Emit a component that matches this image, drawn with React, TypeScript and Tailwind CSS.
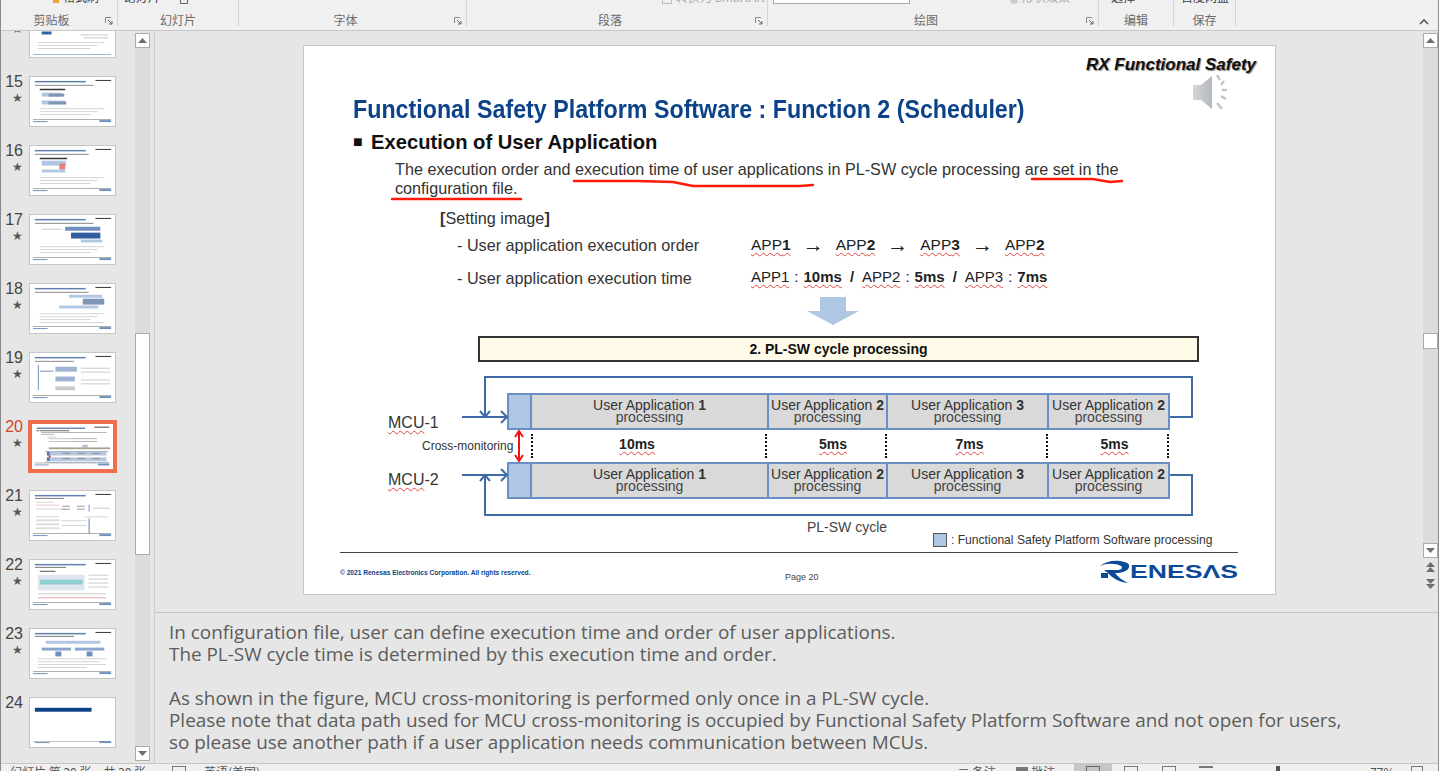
import type { ReactNode } from "react";

const sans = "font-['Liberation_Sans',Arial,sans-serif]";
const cjk = "font-['Noto_Sans_CJK_SC','Noto_Sans',sans-serif]";

type Box = [number, number, number, number, string];

const GRAY = "#c9c9c9";
const BLUE = "#2f5f9e";
const PALE = "#b0c7e3";

const common: Box[] = [
  [5, 4, 52, 1.5, "#5f7fb0"],
  [67, 3, 16, 1, "#333333"],
  [3, 43, 80, 0.6, "#777777"],
  [3, 45, 15, 1, "#6f8fbf"],
  [71, 44, 12, 2, "#6f8fbf"],
];

const lines = (y: number, n: number, x = 8, w = 66, step = 3): Box[] =>
  Array.from({ length: n }, (_, i): Box => [x, y + i * step, w - (i % 3) * 7, 0.8, GRAY]);

const thumbs: { n: number; shapes: Box[] }[] = [
  {
    n: 14,
    shapes: [
      [12, 24, 10, 3, BLUE],
      [52, 27, 28, 1, GRAY],
      [55, 30, 25, 1, GRAY],
      ...lines(35, 3, 8, 68),
      [3, 47, 80, 1, "#9fb4d2"],
    ],
  },
  {
    n: 15,
    shapes: [
      ...common,
      [5, 8, 60, 1, "#888888"],
      [10, 12, 26, 1.5, "#333333"],
      [12, 16, 20, 4, PALE],
      [19, 17, 16, 3, "#7f95b5"],
      [12, 24, 24, 4, PALE],
      [19, 25, 18, 3, "#7f95b5"],
      ...lines(32, 3, 10, 66),
    ],
  },
  {
    n: 16,
    shapes: [
      ...common,
      [5, 8, 55, 1, "#888888"],
      [10, 12, 28, 1.5, "#333333"],
      [12, 15, 25, 5, PALE],
      [30, 18, 6, 6, "#e77b7b"],
      [12, 24, 24, 3, PALE],
      ...lines(32, 3, 10, 66),
    ],
  },
  {
    n: 17,
    shapes: [
      ...common,
      [5, 8, 60, 1, "#888888"],
      [36, 12, 36, 4, "#6f8fbf"],
      [42, 18, 30, 6, BLUE],
      [12, 14, 20, 1, GRAY],
      [52, 25, 22, 3, PALE],
      ...lines(32, 3, 10, 66),
    ],
  },
  {
    n: 18,
    shapes: [
      ...common,
      [5, 8, 55, 1, "#888888"],
      [40, 11, 34, 3, PALE],
      [54, 15, 22, 6, "#7f95b5"],
      [30, 22, 40, 3, PALE],
      ...lines(30, 4, 10, 66),
    ],
  },
  {
    n: 19,
    shapes: [
      ...common,
      [5, 8, 40, 1, "#888888"],
      [8, 12, 1, 26, "#6f8fbf"],
      [10, 18, 14, 1, "#6f8fbf"],
      [26, 14, 22, 5, "#9fb4d2"],
      [52, 15, 30, 1, GRAY],
      [52, 19, 30, 1, GRAY],
      [26, 24, 20, 5, "#9fb4d2"],
      [52, 27, 30, 1, GRAY],
      [52, 31, 30, 1, GRAY],
      [26, 34, 20, 4, GRAY],
    ],
  },
  {
    n: 20,
    shapes: [
      ...common,
      [5, 7, 2, 1, "#333333"],
      [8, 7, 32, 1, "#555555"],
      [10, 9, 70, 0.8, "#9a9a9a"],
      [10, 11, 14, 0.8, "#9a9a9a"],
      [16, 14, 10, 0.8, GRAY],
      [18, 16, 28, 0.8, "#aaaaaa"],
      [18, 19, 28, 0.8, "#aaaaaa"],
      [45, 16, 25, 0.8, "#999999"],
      [45, 19, 25, 0.8, "#999999"],
      [54, 23, 6, 3, PALE],
      [18, 26, 66, 2, "#a8a18c"],
      [16, 31, 64, 4, "#b8c6da"],
      [16, 37, 64, 4, "#b8c6da"],
      [16, 31, 3, 4, "#4f7cb8"],
      [16, 37, 3, 4, "#4f7cb8"],
      [18, 35, 2, 2, "#ee1111"],
      [33, 32, 8, 1, "#888888"],
      [49, 32, 8, 1, "#888888"],
      [65, 32, 8, 1, "#888888"],
      [33, 38, 8, 1, "#888888"],
      [49, 38, 8, 1, "#888888"],
      [65, 38, 8, 1, "#888888"],
      [14, 30, 68, 0.7, "#6f8fbf"],
      [14, 42, 68, 0.7, "#6f8fbf"],
    ],
  },
  {
    n: 21,
    shapes: [
      ...common,
      [5, 7, 30, 1, "#777777"],
      [6, 11, 18, 0.8, GRAY],
      [6, 14, 24, 0.8, "#e7b5b5"],
      [6, 18, 30, 0.8, GRAY],
      [33, 15, 8, 1, "#999999"],
      [33, 18, 8, 1, "#999999"],
      [48, 15, 8, 1, "#999999"],
      [48, 18, 8, 1, "#999999"],
      [60, 14, 1, 7, "#6f8fbf"],
      [64, 17, 18, 1, GRAY],
      [56, 26, 24, 0.8, GRAY],
      [60, 28, 1, 15, "#4f7cb8"],
      [6, 26, 24, 0.8, GRAY],
      [6, 29, 24, 2, "#dddddd"],
      [6, 33, 24, 2, "#dddddd"],
      [6, 37, 24, 2, "#dddddd"],
      [32, 30, 26, 0.8, GRAY],
      [32, 35, 26, 0.8, GRAY],
    ],
  },
  {
    n: 22,
    shapes: [
      ...common,
      [5, 7, 32, 1, "#777777"],
      [10, 11, 16, 1, "#555555"],
      [8, 15, 48, 16, "#dfe6ef"],
      [10, 20, 44, 5, "#8fd0d0"],
      [60, 15, 20, 1, GRAY],
      [60, 19, 20, 1, GRAY],
      [60, 23, 20, 1, GRAY],
      [60, 27, 20, 1, GRAY],
      [8, 34, 70, 1, GRAY],
      [8, 38, 70, 1, "#e7a5a5"],
    ],
  },
  {
    n: 23,
    shapes: [
      ...common,
      [5, 7, 40, 1, "#777777"],
      [16, 12, 56, 3, PALE],
      [12, 19, 30, 3, "#8ba6cc"],
      [46, 19, 30, 3, "#8ba6cc"],
      [26, 23, 6, 5, "#6f8fbf"],
      [58, 23, 6, 5, "#6f8fbf"],
      [8, 30, 70, 0.8, GRAY],
      [8, 33, 64, 0.8, GRAY],
      [8, 36, 70, 0.8, GRAY],
      [8, 39, 50, 0.8, GRAY],
    ],
  },
  {
    n: 24,
    shapes: [
      [5, 10, 58, 4, "#0b4288"],
      [3, 44, 80, 0.6, "#999999"],
      [5, 45, 15, 1, "#6f8fbf"],
      [71, 44, 12, 2, "#6f8fbf"],
    ],
  },
];

const Triangle = ({ up, color = "#6e6e6e" }: { up?: boolean; color?: string }) => (
  <svg width="9" height="5" viewBox="0 0 9 5">
    <path d={up ? "M0 5 4.5 0 9 5Z" : "M0 0 4.5 5 9 0Z"} fill={color} />
  </svg>
);

const ScrollButton = ({ up }: { up?: boolean }) => (
  <div className="flex h-[15px] w-[15px] shrink-0 items-center justify-center border border-[#ababab] bg-white">
    <Triangle up={up} />
  </div>
);

const Launcher = () => (
  <svg width="8" height="8" viewBox="0 0 8 8" className="absolute bottom-[1px] right-[4px]">
    <path d="M.5 6V.5H6" fill="none" stroke="#8a8a8a" />
    <path d="M3 3 7 7M7 4v3H4" fill="none" stroke="#666666" />
  </svg>
);

const RibbonGroup = ({
  label,
  width,
  launcher,
  labelPad,
  children,
}: {
  label: string;
  width: string;
  launcher?: boolean;
  labelPad?: string;
  children?: ReactNode;
}) => (
  <div className={`relative flex h-[26px] shrink-0 flex-col border-r border-[#d4d4d4] ${width}`}>
    <div className="flex h-[4px] items-end overflow-hidden text-[12px] leading-[14px] text-[#777777]">
      {children}
    </div>
    <div className={`flex h-[22px] items-center justify-center pt-[10px] text-[12px] leading-none text-[#6a6a6a] ${labelPad ?? ""}`}>
      {label}
    </div>
    {launcher ? <Launcher /> : null}
  </div>
);

const Ribbon = () => (
  <div className={`flex h-[31px] shrink-0 border-b border-[#c8c8c8] bg-[#f0f0f0] ${cjk}`}>
    <RibbonGroup label="剪贴板" width="w-[117px]" launcher labelPad="pr-[15px]">
      <span className="ml-[52px] flex items-end gap-1">
        <span className="mb-[1px] h-[3px] w-[6px] bg-[#e8a33d]" />
        <span className="text-[#444444]">格式刷</span>
      </span>
    </RibbonGroup>
    <RibbonGroup label="幻灯片" width="w-[121px]">
      <span className="ml-[6px] flex items-end gap-[20px]">
        <span className="text-[#444444]">幻灯片</span>
        <span className="h-[4px] w-[8px] border-x border-b border-[#666666]" />
      </span>
    </RibbonGroup>
    <RibbonGroup label="字体" width="w-[228px]" launcher labelPad="pr-[14px]" />
    <RibbonGroup label="段落" width="w-[301px]" launcher labelPad="pr-[14px]">
      <span className="ml-[195px] flex items-end gap-1 text-[#aaaaaa]">
        <span className="h-[4px] w-[10px] border-x border-b border-[#bbbbbb]" />
        转换为 SmartArt
      </span>
    </RibbonGroup>
    <RibbonGroup label="绘图" width="w-[331px]" launcher labelPad="pr-[14px]">
      <span className="ml-[5px] flex h-[4px] w-[137px] border-x border-b border-[#aaaaaa] bg-white" />
      <span className="ml-[100px] flex items-end gap-1 text-[#aaaaaa]">
        <span className="h-[4px] w-[8px] rounded-b-full bg-[#cccccc]" />
        形状效果
      </span>
    </RibbonGroup>
    <RibbonGroup label="编辑" width="w-[75px]">
      <span className="ml-[12px] text-[#444444]">选择</span>
    </RibbonGroup>
    <RibbonGroup label="保存" width="w-[62px]">
      <span className="ml-[7px] text-[#444444]">百度网盘</span>
    </RibbonGroup>
    <div className="flex flex-1 items-start justify-end pr-[9px] pt-[19px]">
      <svg width="10" height="6" viewBox="0 0 10 6">
        <path d="M1 5 5 1 9 5" fill="none" stroke="#555555" strokeWidth="1.6" />
      </svg>
    </div>
  </div>
);

const Thumb = ({ n, shapes }: { n: number; shapes: Box[] }) => {
  const active = n === 20;
  return (
    <div className="flex h-[69px] shrink-0 items-start">
      <div className="-mt-[3px] flex w-[28px] shrink-0 flex-col items-end pr-[6px]">
        <span className={`text-[16px] leading-[17px] ${active ? "text-[#d24726]" : "text-[#444444]"} ${sans}`}>{n}</span>
        {n !== 24 ? <span className="mt-[2px] text-[12px] leading-[12px] text-[#555555]">★</span> : null}
      </div>
      <div
        className={`h-[51px] w-[87px] shrink-0 overflow-hidden bg-white ${
          active ? "border-[3px] border-[#ee6e4f] outline-1 outline-[#ee6e4f]" : "border border-[#c6c6c6]"
        }`}
      >
        <svg viewBox="0 0 87 50" preserveAspectRatio="none" className="block h-full w-full blur-[0.4px]">
          {shapes.map(([x, y, w, h, fill], i) => (
            <rect key={i} x={x} y={y} width={w} height={h} fill={fill} />
          ))}
        </svg>
      </div>
    </div>
  );
};

const Sidebar = () => (
  <div className="flex w-[154px] shrink-0 border-r border-[#cfcfcf]">
    <div className="w-[134px] shrink-0 overflow-hidden">
      <div className="-mt-[24px] flex flex-col">
        {thumbs.map((t) => (
          <Thumb key={t.n} {...t} />
        ))}
      </div>
    </div>
    <div className="flex w-[15px] shrink-0 flex-col pb-[2px] pt-[2px]">
      <ScrollButton up />
      <div className="h-[285px] bg-[#dcdcdc]" />
      <div className="h-[222px] border border-[#ababab] bg-white" />
      <div className="flex-1 bg-[#dcdcdc]" />
      <ScrollButton />
    </div>
  </div>
);

const Wavy = ({ children }: { children: ReactNode }) => (
  <span className="underline decoration-[#e0443e] decoration-wavy decoration-1 underline-offset-[2px]">{children}</span>
);

const segments = [
  { w: "w-[237px]", n: 1 },
  { w: "w-[119px]", n: 2 },
  { w: "w-[161px]", n: 3 },
  { w: "flex-1", n: 2 },
];

const CycleBar = () => (
  <div className="flex h-[37px] w-[663px] border-2 border-[#6a8fc4] bg-[#d9d9d9] text-[14px] leading-[12px] text-[#333333]">
    <div className="w-[21px] shrink-0 bg-[#b0c7e3]" />
    {segments.map((s, i) => (
      <div key={i} className={`flex shrink-0 flex-col items-center justify-center border-l-2 border-[#6a8fc4] pb-[2px] whitespace-nowrap ${s.w}`}>
        <span>
          User Application <b>{s.n}</b>
        </span>
        <span className="text-[#444444]">processing</span>
      </div>
    ))}
  </div>
);

const Slide = () => (
  <div className={`relative h-[550px] w-[973px] border border-[#c6c6c6] bg-white text-[#333333] ${sans}`}>
    <div className="absolute left-[782px] top-[8px] whitespace-nowrap text-[17px] font-bold italic leading-[22px] text-[#111111] [text-shadow:1px_1px_1px_#8a8a8a]">
      RX Functional Safety
    </div>

    {/* speaker */}
    <svg viewBox="0 0 40 40" className="absolute left-[888px] top-[28px] h-[40px] w-[40px] overflow-visible">
      <defs>
        <linearGradient id="spk" x1="0" x2="1">
          <stop offset="0" stopColor="#d4d7da" />
          <stop offset="1" stopColor="#b4b8bc" />
        </linearGradient>
      </defs>
      <path d="M1 11h8L20 2v33L9 26H1Z" fill="url(#spk)" />
      <path d="M25 1l3 5M32 7l-3 4M35 16h-5M34 25l-5-3M30 35l-5-6" stroke="#c2c5c8" strokeWidth="2.4" fill="none" />
    </svg>

    <div className="absolute left-[49px] top-[46px] origin-left scale-x-[0.894] whitespace-nowrap text-[26px] font-bold leading-[34px] text-[#0b4288]">
      Functional Safety Platform Software : Function 2 (Scheduler)
    </div>
    <div className="absolute left-[49px] top-[84px] flex items-center whitespace-nowrap text-[20.2px] font-bold leading-[24px] text-[#111111]">
      <span className="w-[18px] text-[16px]">■</span>
      Execution of User Application
    </div>
    <div className="absolute left-[91px] top-[114px] w-[780px] text-[16.2px] leading-[19px]">
      The execution order and execution time of user applications in PL-SW cycle processing are set in the
      <br />
      configuration file.
    </div>

    <div className="absolute left-[136px] top-[163px] text-[16.2px] leading-[19px]">
      <b>[</b>Setting image<b>]</b>
    </div>
    <div className="absolute left-[153px] top-[190px] text-[16.2px] leading-[19px]">- User application execution order</div>
    <div className="absolute left-[153px] top-[223px] text-[16.2px] leading-[19px]">- User application execution time</div>

    <div className="absolute left-[447px] top-[189px] flex text-[15.5px] leading-[19px] text-[#222222]">
      {[1, 2, 3, 2].map((n, i) => (
        <span key={i} className="flex">
          <Wavy>
            APP<b>{n}</b>
          </Wavy>
          {i < 3 ? <span className="w-[45px] text-center text-[21px]">→</span> : null}
        </span>
      ))}
    </div>
    <div className="absolute left-[447px] top-[221px] flex gap-[5px] whitespace-nowrap text-[15px] leading-[19px] text-[#222222]">
      <Wavy>APP1</Wavy>:
      <b>
        <Wavy>10ms</Wavy>
      </b>
      <b className="mx-[3px]">/</b>
      <Wavy>APP2</Wavy>:
      <b>
        <Wavy>5ms</Wavy>
      </b>
      <b className="mx-[3px]">/</b>
      <Wavy>APP3</Wavy>:
      <b>
        <Wavy>7ms</Wavy>
      </b>
    </div>

    <div className="absolute left-[174px] top-[290px] flex h-[26px] w-[721px] items-center justify-center border-2 border-[#333333] bg-[#fffbe8] text-[14px] font-bold leading-none text-[#111111]">
      2. PL-SW cycle processing
    </div>

    <div className="absolute left-[84px] top-[367px] text-[16px] leading-[19px]">
      <Wavy>MCU</Wavy>-1
    </div>
    <div className="absolute left-[84px] top-[424px] text-[16px] leading-[19px]">
      <Wavy>MCU</Wavy>-2
    </div>
    <div className="absolute left-[118px] top-[393px] text-[12px] leading-[14px]">Cross-monitoring</div>

    <div className="absolute left-[203px] top-[347px]">
      <CycleBar />
    </div>
    <div className="absolute left-[203px] top-[416px]">
      <CycleBar />
    </div>

    <div className="absolute left-[227px] top-[388px] flex h-[24px] w-[640px] text-[14px] font-bold leading-[20px] text-[#222222]">
      <div className="flex w-[236px] justify-center border-x-2 border-dotted border-[#111111] pr-[24px]">
        <Wavy>10ms</Wavy>
      </div>
      <div className="flex w-[120px] justify-center border-r-2 border-dotted border-[#111111] pl-[14px]">
        <Wavy>5ms</Wavy>
      </div>
      <div className="flex w-[161px] justify-center border-r-2 border-dotted border-[#111111] pl-[6px]">
        <Wavy>7ms</Wavy>
      </div>
      <div className="flex w-[121px] justify-center border-r-2 border-dotted border-[#111111] pl-[14px]">
        <Wavy>5ms</Wavy>
      </div>
    </div>

    <div className="absolute left-[503px] top-[473px] text-[14px] leading-[16px] text-[#444444]">PL-SW cycle</div>
    <div className="absolute left-[629px] top-[487px] flex items-center gap-[4px] whitespace-nowrap text-[12.1px] leading-[14px]">
      <span className="h-[14px] w-[14px] border border-[#555555] bg-[#b0c7e3]" />: Functional Safety Platform Software processing
    </div>

    <div className="absolute left-[36px] top-[506px] h-px w-[898px] bg-[#444444]" />
    <div className="absolute left-[36px] top-[522px] whitespace-nowrap text-[6.6px] font-bold leading-[10px] text-[#0b4288]">
      © 2021 Renesas Electronics Corporation. All rights reserved.
    </div>
    <div className="absolute left-[481px] top-[525px] text-[9px] leading-[12px] text-[#444444]">Page 20</div>

    {/* connectors, hand-drawn marks and the logo use page coordinates */}
    <svg viewBox="304 46 971 548" className="pointer-events-none absolute inset-0 h-full w-full overflow-visible">
      <g fill="none" stroke="#ff1a0a" strokeWidth="2.4" strokeLinecap="round" strokeLinejoin="round">
        <path d="M574 181 637 181 673 182 693 186 800 186 813 185" />
        <path d="M1032 179 1093 179 1110 182 1122 181" />
        <path d="M392 199 521 199" />
      </g>
      <path d="M820 297h26v14h13l-26 14-26-14h13Z" fill="#b0c7e3" />
      <g fill="none" stroke="#3f6ba6" strokeWidth="2">
        <path d="M1170 417h22v-40H485v39" />
        <path d="M1170 475h22v40H485v-39" />
        <path d="M462 417h44M501 411l6 6-6 6" />
        <path d="M462 475h44M501 469l6 6-6 6" />
        <path d="M480 411l5 6 5-6" />
        <path d="M480 481l5-6 5 6" />
      </g>
      <g fill="none" stroke="#ee1111" strokeWidth="2">
        <path d="M519 432v28M515 437l4-6 4 6M515 455l4 6 4-6" />
      </g>
      <g fill="#0b4a98">
        <path d="M1100 566C1105 562 1112 560 1120 561C1127 562 1130 564 1129 567C1128 571 1122 573 1115 573C1118 577 1122 580 1128 583C1119 582 1112 578 1108 573L1104 570L1118 570C1122 570 1123 567 1121 566C1116 563 1106 563 1100 566Z" />
        <rect x="1101" y="573" width="7" height="5" />
        <text
          x="1130"
          y="578"
          fontSize="18"
          fontWeight="700"
          textLength="108"
          lengthAdjust="spacingAndGlyphs"
          fontFamily="'Liberation Sans',Arial,sans-serif"
        >
          ENESΛS
        </text>
      </g>
    </svg>
  </div>
);

const RightBar = () => (
  <div className="flex w-[15px] shrink-0 flex-col items-center pt-[2px]">
    <ScrollButton up />
    <div className="h-[285px] w-full bg-[#dcdcdc]" />
    <div className="h-[16px] w-full border border-[#ababab] bg-white" />
    <div className="h-[194px] w-full bg-[#dcdcdc]" />
    <ScrollButton />
    <div className="mt-[4px] flex flex-col items-center">
      <Triangle up />
      <Triangle up />
    </div>
    <div className="mt-[7px] flex flex-col items-center">
      <Triangle />
      <Triangle />
    </div>
  </div>
);

const Notes = () => (
  <div className="h-[151px] shrink-0 border-t border-[#c6c6c6] bg-[#e6e6e6] pl-[14px] pt-[8px] font-['Open_Sans',sans-serif] text-[18.9px] leading-[22px] whitespace-nowrap text-[#5c5c5c]">
    <p>In configuration file, user can define execution time and order of user applications.</p>
    <p>The PL-SW cycle time is determined by this execution time and order.</p>
    <p className="h-[22px]" />
    <p>As shown in the figure, MCU cross-monitoring is performed only once in a PL-SW cycle.</p>
    <p>Please note that data path used for MCU cross-monitoring is occupied by Functional Safety Platform Software and not open for users,</p>
    <p>so please use another path if a user application needs communication between MCUs.</p>
  </div>
);

const StatusBar = () => (
  <div className={`flex h-[8px] shrink-0 items-start overflow-hidden border-t border-[#c6c6c6] bg-[#f0f0f0] text-[12px] leading-[14px] text-[#555555] ${cjk}`}>
    <span className="ml-[9px] mt-px w-[162px] shrink-0">幻灯片 第 20 张，共 30 张</span>
    <span className="mt-[2px] h-[6px] w-[14px] shrink-0 border border-[#777777]" />
    <span className="ml-[18px] mt-px shrink-0">英语(美国)</span>
    <span className="ml-[696px] mt-px w-[40px] shrink-0 text-right">≡ 备注</span>
    <span className="ml-[20px] mt-px flex shrink-0 gap-[3px]">
      <span className="mt-[2px] h-[6px] w-[12px] bg-[#777777]" />
      批注
    </span>
    <span className="ml-[19px] flex h-full w-[38px] shrink-0 justify-center bg-[#c6c6c6]">
      <span className="mt-[2px] h-[6px] w-[14px] border border-[#666666]" />
    </span>
    <span className="ml-[12px] mt-[2px] h-[6px] w-[14px] shrink-0 border border-[#777777]" />
    <span className="ml-[24px] mt-[2px] h-[6px] w-[14px] shrink-0 border border-[#777777]" />
    <span className="ml-[23px] mt-[2px] h-[6px] w-[14px] shrink-0 border-t-2 border-[#777777]" />
    <span className="ml-[63px] mt-[2px] h-[6px] w-[4px] shrink-0 bg-[#555555]" />
    <span className="ml-[90px] mt-px shrink-0">77%</span>
    <span className="ml-[16px] mt-[2px] h-[6px] w-[12px] shrink-0 border border-[#777777]" />
  </div>
);

export default function App() {
  return (
    <div className={`flex h-[771px] w-[1439px] flex-col overflow-hidden border-x border-[#8a8a8a] bg-[#e6e6e6] ${sans}`}>
      <Ribbon />
      <div className="flex min-h-0 flex-1">
        <Sidebar />
        <div className="flex min-w-0 flex-1 flex-col">
          <div className="flex h-[581px] shrink-0">
            <div className="min-w-0 flex-1 pl-[148px] pt-[14px]">
              <Slide />
            </div>
            <RightBar />
          </div>
          <Notes />
        </div>
      </div>
      <StatusBar />
    </div>
  );
}
